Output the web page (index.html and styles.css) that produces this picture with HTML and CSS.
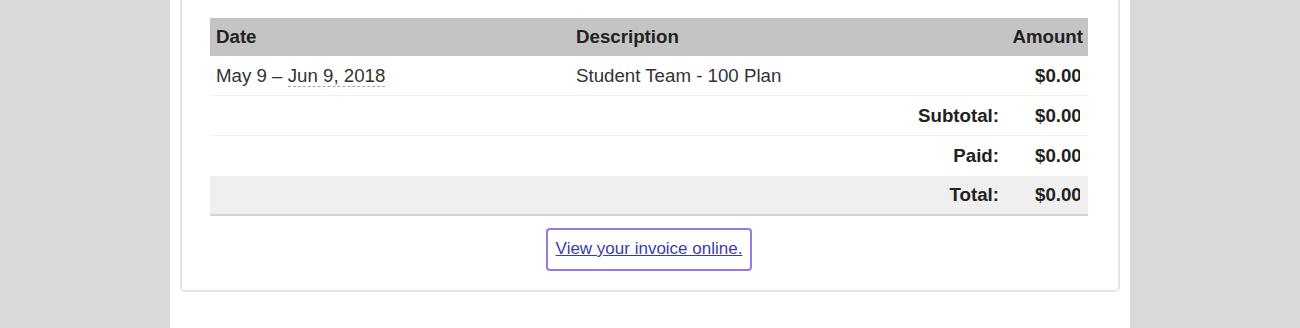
FILE: index.html
```html
<!DOCTYPE html>
<html>
<head>
<meta charset="utf-8">
<link rel="stylesheet" href="styles.css">
</head>
<body>
<div class="page">
  <div class="card">
    <div class="invoice">
      <div class="row head">
        <div class="cell">Date</div>
        <div class="cell">Description</div>
        <div class="cell amt">Amount</div>
      </div>
      <div class="row line">
        <div class="cell">May 9 – <span class="date">Jun 9, 2018</span></div>
        <div class="cell">Student Team - 100 Plan</div>
        <div class="cell amt"><span class="clip">$0.00</span></div>
      </div>
      <div class="row line">
        <div class="cell"></div>
        <div class="cell label">Subtotal:</div>
        <div class="cell amt"><span class="clip">$0.00</span></div>
      </div>
      <div class="row">
        <div class="cell"></div>
        <div class="cell label">Paid:</div>
        <div class="cell amt"><span class="clip">$0.00</span></div>
      </div>
      <div class="row total">
        <div class="cell"></div>
        <div class="cell label">Total:</div>
        <div class="cell amt"><span class="clip">$0.00</span></div>
      </div>
    </div>
    <div class="actions">
      <a class="btn" href="#">View your invoice online.</a>
    </div>
  </div>
</div>
</body>
</html>
```
FILE: styles.css
```css
html, body {
  margin: 0;
  padding: 0;
  background: #d9d9d9;
  font-family: "Liberation Sans", Arial, Helvetica, sans-serif;
  color: #333;
}
.page {
  width: 960px;
  height: 328px;
  margin: 0 auto;
  background: #ffffff;
  overflow: hidden;
}
.card {
  margin: 0 10px;
  border: 2px solid #e4e4e4;
  border-top: none;
  border-radius: 0 0 5px 5px;
  padding: 18px 30px 19px 28px;
}
.invoice {
  width: 878px;
}
.row {
  display: grid;
  grid-template-columns: 360px 1fr 82px;
  height: 40px;
  align-items: center;
  font-size: 18.7px;
}
.row.line {
  border-bottom: 1px solid #f1f1f1;
  height: 39px;
}
.row.head {
  background: #c4c4c4;
  height: 38px;
  font-weight: bold;
  color: #222;
}
.row.total {
  background: #efefef;
  border-bottom: 2px solid #d4d4d4;
  height: 38px;
}
.cell {
  padding: 0 6px;
  white-space: nowrap;
}
.cell.amt {
  text-align: right;
  padding-right: 5px;
  font-weight: bold;
  color: #222;
}
.cell.label {
  text-align: right;
  font-weight: bold;
  color: #222;
  padding-right: 7px;
}
.clip {
  display: inline-block;
  width: 45px;
  overflow: hidden;
  text-align: left;
  vertical-align: bottom;
  margin-right: 3px;
}
.date {
  border-bottom: 1px dashed #aaaaaa;
}
.actions {
  display: flex;
  justify-content: center;
  padding-top: 12px;
}
.btn {
  display: inline-block;
  border: 2px solid #9579e6;
  border-radius: 4px;
  padding: 10px 8px 11px;
  font-size: 17px;
  color: #3b3bb0;
  text-decoration: underline;
  line-height: 18px;
}
```
